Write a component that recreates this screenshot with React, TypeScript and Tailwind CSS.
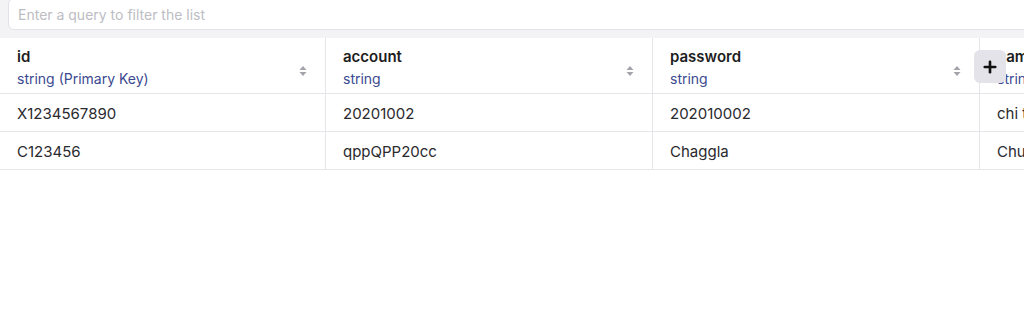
import { Plus } from "lucide-react";

const columns = [
  { name: "id", type: "string (Primary Key)", width: "w-[326px]" },
  { name: "account", type: "string", width: "w-[327px]" },
  { name: "password", type: "string", width: "w-[327px]" },
  { name: "name", type: "string", width: "w-[327px]" },
];

const rows = [
  ["X1234567890", "20201002", "202010002", "chi ting"],
  ["C123456", "qppQPP20cc", "Chaggla", "Chu Chen"],
];

function SortIcon() {
  return (
    <svg width="8" height="12" viewBox="0 0 8 12" className="shrink-0 self-center mt-[2px]">
      <path d="M4 1 L7.5 5 L0.5 5 Z" fill="#a3a3ab" />
      <path d="M4 11 L7.5 7 L0.5 7 Z" fill="#a3a3ab" />
    </svg>
  );
}

export default function App() {
  return (
    <div className="w-[1024px] h-[330px] overflow-hidden bg-white font-['Inter',sans-serif] text-[15px] text-[#2a2a2e]">
      <div className="bg-[#f3f3f6] pl-2 h-[38px]">
        <input
          className="-mt-[2px] h-[32px] w-[1030px] rounded-md border border-[#e2e2e8] bg-white px-[9px] text-[14px] text-[#333] placeholder:text-[#bdbdc4] outline-none"
          placeholder="Enter a query to filter the list"
        />
      </div>

      <div className="flex w-[1100px]">
        {columns.map((col, ci) => (
          <div key={col.name} className={`${col.width} shrink-0 border-r border-[#e6e6ea]`}>
            <div className={`relative h-[56px] border-b border-[#e6e6ea] flex items-start justify-between pt-[9px] pl-[17px] pr-[18px] ${ci === 2 ? "z-10" : ""}`}>
              <div className="flex flex-col">
                <span className="font-semibold text-[15px] leading-[20px] text-[#1d1d21]">{col.name}</span>
                <span className="text-[14px] leading-[24px] text-[#3c4a8f]">{col.type}</span>
              </div>
              <SortIcon />
              {ci === 2 && (
                <button className="absolute right-[-27px] top-[12px] w-[32px] h-[33px] rounded-md bg-[#e3e3e9] flex items-center justify-center">
                  <Plus size={18} strokeWidth={3.5} color="#111" />
                </button>
              )}
            </div>
            {rows.map((row, ri) => (
              <div key={ri} className="h-[38px] border-b border-[#e6e6ea] flex items-center pt-[3px] pl-[17px] whitespace-nowrap">
                {row[ci]}
              </div>
            ))}
          </div>
        ))}
      </div>
    </div>
  );
}
